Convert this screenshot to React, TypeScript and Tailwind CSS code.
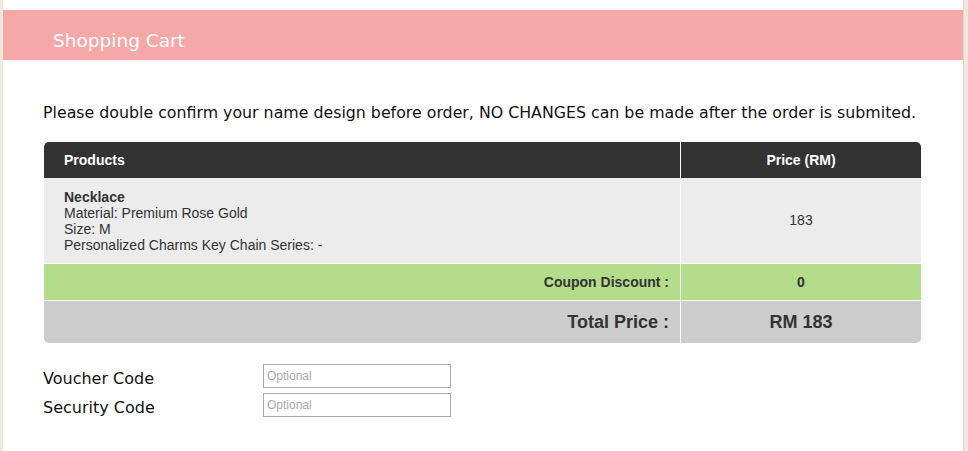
import React from "react";

export default function App() {
  return (
    <div className="min-h-[451px] w-[968px] bg-[#f1e7db] pl-[3px] pr-[4px]">
      <div className="min-h-[451px] bg-white pt-[10px] border-r border-[#e0d6ca]">
        {/* header bar */}
        <div className="h-[50px] bg-[#f5a8a8] flex items-center pl-[50px] pt-[11px]">
          <h1 className="text-[18.5px] text-white" style={{ fontFamily: '"DejaVu Sans", sans-serif' }}>
            Shopping Cart
          </h1>
        </div>

        <div className="px-[40px] pt-[43px]">
          <p className="text-[15.8px] whitespace-nowrap text-[#111] leading-[20px]" style={{ fontFamily: '"DejaVu Sans", sans-serif' }}>
            Please double confirm your name design before order, NO CHANGES can be made after the order is submited.
          </p>

          {/* cart table */}
          <div className="mt-[19px] ml-[1px] w-[877px] rounded-[5px] overflow-hidden text-[14px] text-[#333]" style={{ fontFamily: '"Liberation Sans", Arial, sans-serif' }}>
            <div className="grid grid-cols-[637px_1fr] h-[36px] bg-[#333333] text-white font-bold">
              <div className="flex items-center pl-[20px] border-r border-white">Products</div>
              <div className="flex items-center justify-center">Price (RM)</div>
            </div>
            <div className="grid grid-cols-[637px_1fr] h-[86px] bg-[#ececec] border-b border-white">
              <div className="pl-[20px] pt-[11px] leading-[16px] border-r border-white">
                <div className="font-bold">Necklace</div>
                <div>Material: Premium Rose Gold</div>
                <div>Size: M</div>
                <div>Personalized Charms Key Chain Series: -</div>
              </div>
              <div className="flex items-center justify-center">183</div>
            </div>
            <div className="grid grid-cols-[637px_1fr] h-[37px] bg-[#b3dd8b] border-b border-white font-bold">
              <div className="flex items-center justify-end pr-[11px] border-r border-white">Coupon Discount :</div>
              <div className="flex items-center justify-center">0</div>
            </div>
            <div className="grid grid-cols-[637px_1fr] h-[42px] bg-[#cccccc] font-bold">
              <div className="flex items-center justify-end pr-[11px] text-[18px] border-r border-white">Total Price :</div>
              <div className="flex items-center justify-center text-[18px]">RM 183</div>
            </div>
          </div>

          {/* codes */}
          <div className="mt-[21px] flex flex-col gap-[5px]" style={{ fontFamily: '"DejaVu Sans", sans-serif' }}>
            {["Voucher Code", "Security Code"].map((label) => (
              <div key={label} className="flex items-center h-[24px]">
                <div className="w-[220px] text-[16px] leading-[24px] text-[#111] translate-y-[3px]">{label}</div>
                <input
                  placeholder="Optional"
                  className="w-[188px] h-[24px] border border-[#aaaaaa] px-[3px] text-[12px] placeholder:text-[#aaaaaa] outline-none"
                  style={{ fontFamily: '"Liberation Sans", Arial, sans-serif' }}
                />
              </div>
            ))}
          </div>
        </div>
      </div>
    </div>
  );
}
